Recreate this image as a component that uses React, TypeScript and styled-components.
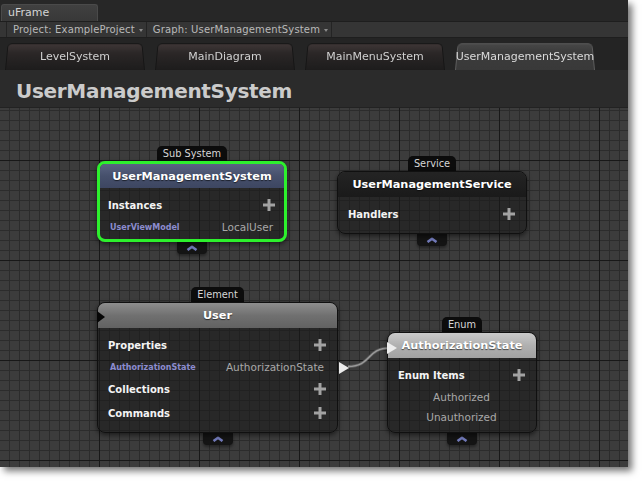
import React from 'react';
import styled, { createGlobalStyle, css } from 'styled-components';

const GlobalStyle = createGlobalStyle`
  html, body { margin: 0; padding: 0; background: #ffffff; }
  body { font-family: "DejaVu Sans", "Liberation Sans", sans-serif; }
  * { box-sizing: border-box; }
`;

const Page = styled.div`
  width: 643px;
  height: 482px;
  background: #ffffff;
`;

const Window = styled.div`
  width: 628px;
  height: 467px;
  display: flex;
  flex-direction: column;
  background: #2a2a2a;
  box-shadow: 4px 4px 7px rgba(0, 0, 0, 0.55);
  overflow: hidden;
`;

const TitleStrip = styled.div`
  height: 21px;
  flex: none;
  display: flex;
  align-items: flex-end;
  padding-left: 1px;
  background: #272727;
`;

const WindowTab = styled.div`
  width: 97px;
  height: 17px;
  padding-left: 6px;
  background: linear-gradient(#404040, #383838);
  border: 1px solid #4a4a4a;
  border-bottom: none;
  border-radius: 3px 3px 0 0;
  color: #d4d4d4;
  font-size: 11px;
  line-height: 16px;
`;

const Toolbar = styled.div`
  height: 17px;
  flex: none;
  display: flex;
  padding-left: 6px;
  background: #353535;
  border-top: 1px solid #1e1e1e;
  border-bottom: 1px solid #1e1e1e;
`;

const ToolItem = styled.div`
  display: flex;
  align-items: center;
  gap: 4px;
  padding: 0 3px 0 6px;
  border-left: 1px solid #242424;
  font-size: 10px;
  letter-spacing: 0.15px;
  color: #b9b9b9;
  white-space: nowrap;
  &:last-child { border-right: 1px solid #242424; }
`;

const DropArrow = styled.span`
  width: 0;
  height: 0;
  border-left: 2.5px solid transparent;
  border-right: 2.5px solid transparent;
  border-top: 3px solid #8a8a8a;
  margin-top: 1px;
`;

const TabRow = styled.div`
  height: 32px;
  flex: none;
  display: flex;
  align-items: flex-end;
  gap: 10px;
  padding-left: 5px;
  background: #242424;
`;

const Tab = styled.div<{ $active?: boolean }>`
  position: relative;
  z-index: 0;
  width: 140px;
  height: 28px;
  display: flex;
  align-items: center;
  justify-content: center;
  font-size: 11px;
  white-space: nowrap;
  color: ${p => (p.$active ? '#dadada' : '#d0d0d0')};
  &::before {
    content: '';
    position: absolute;
    inset: 0;
    z-index: -1;
    border-radius: 5px 5px 0 0;
    transform-origin: bottom center;
    transform: perspective(100px) rotateX(8deg);
    ${p =>
      p.$active
        ? css`
            background: linear-gradient(#474747, #3c3c3c 30%, #393939);
            border: 1px solid #5c5c5c;
            border-bottom: none;
          `
        : css`
            background: linear-gradient(#3e3636, #2b2727 35%, #1d1c1c);
            border: 1px solid #151515;
            border-bottom: none;
          `}
  }
`;

const TitleBar = styled.div`
  height: 38px;
  flex: none;
  padding: 5px 0 0 16px;
  background: #2b2b2b;
  border-bottom: 1px solid #222;
  color: #cbcbcb;
  font-size: 20px;
  font-weight: bold;
  letter-spacing: -0.3px;
  line-height: 32px;
`;

const Canvas = styled.div`
  position: relative;
  flex: 1;
  background-color: #3c3c3c;
  background-image:
    linear-gradient(90deg, #181818 1px, transparent 1px),
    linear-gradient(180deg, #181818 1px, transparent 1px),
    linear-gradient(90deg, #2c2c2c 1px, transparent 1px),
    linear-gradient(180deg, #2c2c2c 1px, transparent 1px);
  background-size: 100px 100px, 100px 100px, 10px 10px, 10px 10px;
  background-position: 99px 0, 0 52px, 9px 0, 0 2px;
`;

const Wires = styled.svg`
  position: absolute;
  left: 0;
  top: 0;
  width: 100%;
  height: 100%;
  pointer-events: none;
`;

const NodeWrap = styled.div<{ $x: number; $y: number; $w: number }>`
  position: absolute;
  left: ${p => p.$x}px;
  top: ${p => p.$y}px;
  width: ${p => p.$w}px;
  display: flex;
  flex-direction: column;
  align-items: center;
`;

const NodeLabel = styled.div`
  height: 15px;
  padding: 0 6px;
  background: #0c0c0c;
  border-radius: 5px 5px 0 0;
  color: #d6d6d6;
  font-size: 9.8px;
  line-height: 15px;
`;

const Box = styled.div<{ $selected?: boolean }>`
  position: relative;
  align-self: stretch;
  border-radius: 8px;
  background: rgba(26, 26, 26, 0.58);
  border: ${p => (p.$selected ? '3px solid #2df02d' : '1px solid #101010')};
  box-shadow: 0 2px 5px rgba(0, 0, 0, 0.55), inset 0 1px 0 rgba(255, 255, 255, 0.12);
`;

type HeaderKind = 'subsystem' | 'service' | 'element' | 'enum';

const headerBg: Record<HeaderKind, string> = {
  subsystem: 'linear-gradient(#5a6482, #46506c 50%, #3d4661)',
  service: 'linear-gradient(#242424, #1a1a1a)',
  element: 'linear-gradient(#8e8e8e, #707070 50%, #626262)',
  enum: 'linear-gradient(#cacaca, #b0b0b0 50%, #a2a2a2)',
};

const Header = styled.div<{ $kind: HeaderKind; $selected?: boolean }>`
  height: ${p => (p.$selected ? 24 : 25)}px;
  display: flex;
  align-items: center;
  justify-content: center;
  border-radius: ${p => (p.$selected ? '5px 5px 0 0' : '7px 7px 0 0')};
  background: ${p => headerBg[p.$kind]};
  color: #ffffff;
  font-size: 11.3px;
  font-weight: bold;
  text-shadow: 0 1px 1px rgba(0, 0, 0, 0.6);
`;

const Body = styled.div<{ $padBottom: number; $tight?: boolean }>`
  padding: 5px 0 ${p => p.$padBottom}px;
  --pl: ${p => (p.$tight ? 8 : 10)}px;
  --pr: ${p => (p.$tight ? 9 : 11)}px;
`;

const SectionRow = styled.div`
  height: 24px;
  display: flex;
  align-items: center;
  justify-content: space-between;
  padding: 0 var(--pr) 0 var(--pl);
  color: #f4f4f4;
  font-size: 10px;
  font-weight: bold;
`;

const ItemRow = styled.div<{ $center?: boolean }>`
  height: 20px;
  display: flex;
  align-items: center;
  justify-content: ${p => (p.$center ? 'center' : 'space-between')};
  padding: 0 calc(var(--pr) + 2px) 0 calc(var(--pl) + 2px);
`;

const ItemName = styled.span`
  color: #8c8ccf;
  font-size: 8px;
  font-weight: bold;
`;

const ItemValue = styled.span`
  color: #a8a8a8;
  font-size: 10.5px;
`;

const Collapse = styled.div`
  width: 30px;
  height: 12px;
  display: flex;
  align-items: center;
  justify-content: center;
  background: #141414;
  border-radius: 0 0 4px 4px;
  box-shadow: 0 2px 3px rgba(0, 0, 0, 0.4);
`;

const Port = styled.div<{ $side: 'left' | 'right'; $top: number; $dark?: boolean }>`
  position: absolute;
  top: ${p => p.$top}px;
  ${p => (p.$side === 'left' ? 'left: -1px;' : 'right: -12px;')}
  width: ${p => (p.$dark ? 8 : 10)}px;
  height: 12px;
  background: ${p => (p.$dark ? '#060606' : '#ececec')};
  clip-path: polygon(0 0, 100% 50%, 0 100%);
`;

const Plus = () => (
  <svg width="12" height="12" viewBox="0 0 12 12">
    <rect x="4.5" y="0" width="3" height="12" fill="#a2a2a2" />
    <rect x="0" y="4.5" width="12" height="3" fill="#a2a2a2" />
  </svg>
);

const Chevron = () => (
  <svg width="12" height="6" viewBox="0 0 12 6">
    <polyline points="1.5,5 6,1.8 10.5,5" fill="none" stroke="#7179b8" strokeWidth="2.6" strokeLinejoin="round" />
  </svg>
);

type NodeProps = {
  x: number;
  y: number;
  w: number;
  label: string;
  title: string;
  kind: HeaderKind;
  selected?: boolean;
  padBottom: number;
  ports?: React.ReactNode;
  children: React.ReactNode;
};

const GraphNode = ({ x, y, w, label, title, kind, selected, padBottom, ports, children }: NodeProps) => (
  <NodeWrap $x={x} $y={y} $w={w}>
    <NodeLabel>{label}</NodeLabel>
    <Box $selected={selected}>
      <Header $kind={kind} $selected={selected}>{title}</Header>
      <Body $padBottom={padBottom} $tight={selected}>{children}</Body>
      {ports}
    </Box>
    <Collapse>
      <Chevron />
    </Collapse>
  </NodeWrap>
);

const Section = ({ name }: { name: string }) => (
  <SectionRow>
    <span>{name}</span>
    <Plus />
  </SectionRow>
);

export default function App() {
  return (
    <Page>
      <GlobalStyle />
      <Window>
        <TitleStrip>
          <WindowTab>uFrame</WindowTab>
        </TitleStrip>
        <Toolbar>
          <ToolItem>
            Project: ExampleProject <DropArrow />
          </ToolItem>
          <ToolItem>
            Graph: UserManagementSystem <DropArrow />
          </ToolItem>
        </Toolbar>
        <TabRow>
          <Tab>LevelSystem</Tab>
          <Tab>MainDiagram</Tab>
          <Tab>MainMenuSystem</Tab>
          <Tab $active>UserManagementSystem</Tab>
        </TabRow>
        <TitleBar>UserManagementSystem</TitleBar>
        <Canvas>
          <Wires>
            <path d="M 348 258.5 C 372 258.5, 366 240, 390 240" fill="none" stroke="#5a5a5a" strokeWidth="3" />
            <path d="M 348 258.5 C 372 258.5, 366 240, 390 240" fill="none" stroke="#9a9a9a" strokeWidth="1.5" />
          </Wires>

          <GraphNode x={97} y={38} w={190} label="Sub System" title="UserManagementSystem" kind="subsystem" selected padBottom={2}>
            <Section name="Instances" />
            <ItemRow>
              <ItemName>UserViewModel</ItemName>
              <ItemValue>LocalUser</ItemValue>
            </ItemRow>
          </GraphNode>

          <GraphNode x={337} y={48} w={190} label="Service" title="UserManagementService" kind="service" padBottom={7}>
            <Section name="Handlers" />
          </GraphNode>

          <GraphNode
            x={97}
            y={179}
            w={241}
            label="Element"
            title="User"
            kind="element"
            padBottom={7}
            ports={
              <>
                <Port $side="left" $top={8} $dark />
                <Port $side="right" $top={59} />
              </>
            }
          >
            <Section name="Properties" />
            <ItemRow>
              <ItemName>AuthorizationState</ItemName>
              <ItemValue>AuthorizationState</ItemValue>
            </ItemRow>
            <Section name="Collections" />
            <Section name="Commands" />
          </GraphNode>

          <GraphNode
            x={387}
            y={209}
            w={150}
            label="Enum"
            title="AuthorizationState"
            kind="enum"
            padBottom={5}
            ports={<Port $side="left" $top={9} />}
          >
            <Section name="Enum Items" />
            <ItemRow $center>
              <ItemValue>Authorized</ItemValue>
            </ItemRow>
            <ItemRow $center>
              <ItemValue>Unauthorized</ItemValue>
            </ItemRow>
          </GraphNode>
        </Canvas>
      </Window>
    </Page>
  );
}
